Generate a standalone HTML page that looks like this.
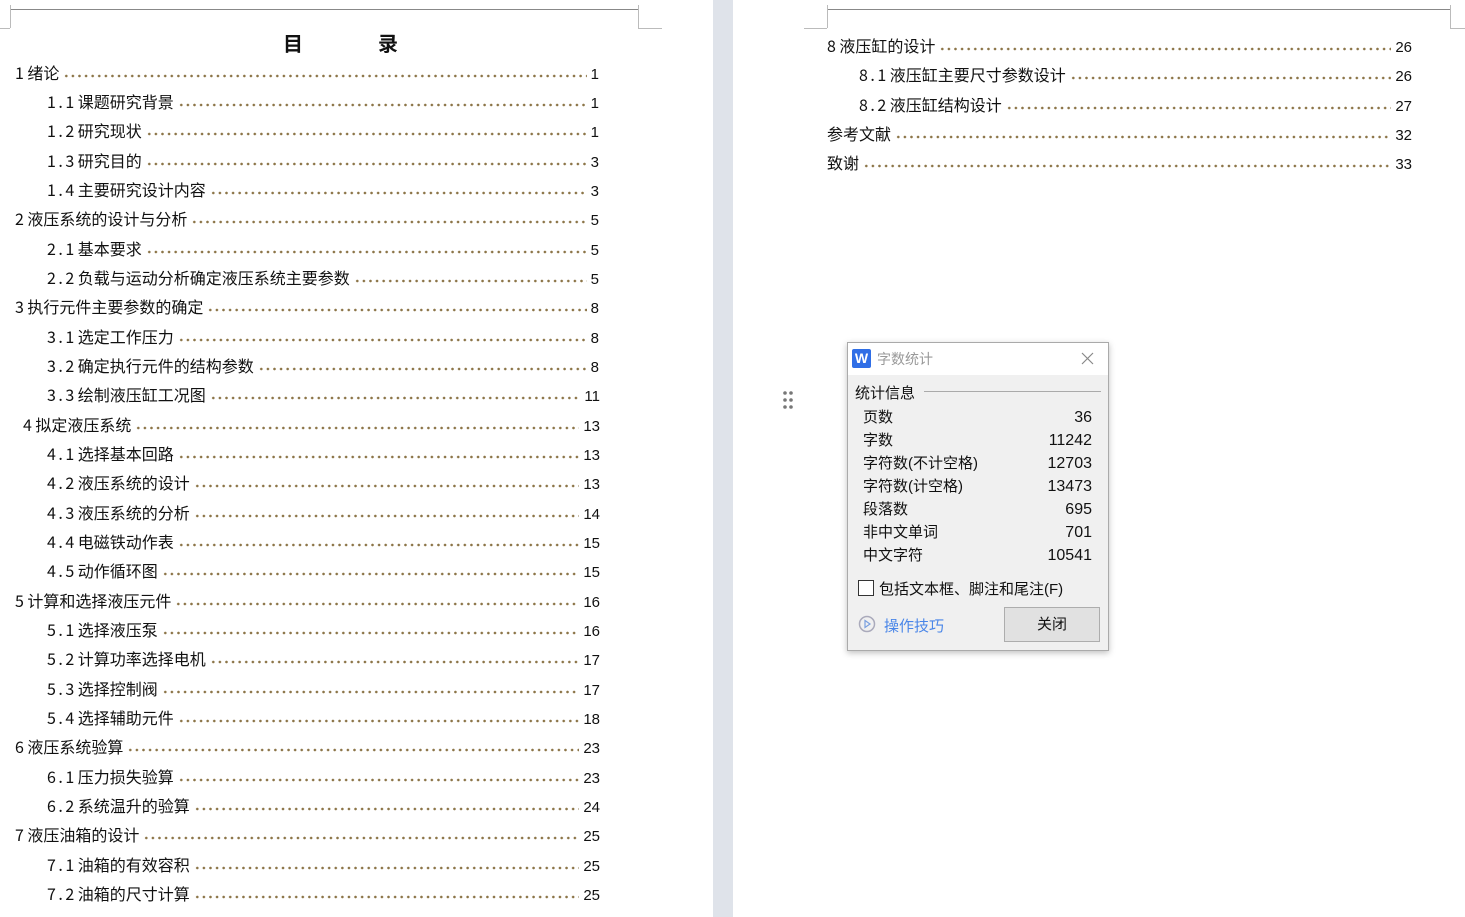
<!DOCTYPE html>
<html><head><meta charset="utf-8"><style>
body{margin:0;width:1465px;height:917px;overflow:hidden;background:#fff;position:relative;font-family:"Liberation Sans","Noto Sans CJK SC",sans-serif;color:#111}
.a{position:absolute}
.r{position:absolute;height:20px;line-height:20px;font-size:16px;display:flex;align-items:baseline;font-family:"Noto Sans CJK SC",sans-serif}
.r .num{letter-spacing:2.5px;margin-right:1px}
.r .f{flex:1;margin:0 4px;height:16px;align-self:flex-start;background-image:radial-gradient(circle at 50% 50%,#8c7548 1.1px,transparent 1.5px);background-size:6.6px 4px;background-repeat:repeat-x;background-position:0 100%}
.r .n{font-family:"Liberation Sans",sans-serif;font-size:15px}
.dlg{font-family:"Liberation Sans","Noto Sans CJK SC",sans-serif;font-size:15px}
</style></head><body>
<div class="a" style="left:713px;top:0;width:20px;height:917px;background:#dfe3ea"></div>
<div class="a" style="left:10px;top:9px;width:628px;height:1px;background:#888"></div>
<div class="a" style="left:10px;top:5px;width:1px;height:23px;background:#bbb"></div>
<div class="a" style="left:0;top:28px;width:10px;height:1px;background:#bbb"></div>
<div class="a" style="left:638px;top:5px;width:1px;height:23px;background:#bbb"></div>
<div class="a" style="left:638px;top:28px;width:24px;height:1px;background:#bbb"></div>
<div class="a" style="left:827px;top:9px;width:623px;height:1px;background:#888"></div>
<div class="a" style="left:827px;top:5px;width:1px;height:23px;background:#bbb"></div>
<div class="a" style="left:804px;top:28px;width:23px;height:1px;background:#bbb"></div>
<div class="a" style="left:1450px;top:5px;width:1px;height:23px;background:#bbb"></div>
<div class="a" style="left:1450px;top:28px;width:15px;height:1px;background:#bbb"></div>

<div class="a" style="left:283px;top:28px;font-size:20px;font-weight:bold;font-family:'Noto Sans CJK SC',sans-serif">目</div>
<div class="a" style="left:378px;top:28px;font-size:20px;font-weight:bold;font-family:'Noto Sans CJK SC',sans-serif">录</div>

<div class="r" style="left:15px;width:584px;top:62px"><span class="num">1 </span><span>绪论</span><span class="f"></span><span class="n">1</span></div>
<div class="r" style="left:47px;width:552px;top:91px"><span class="num">1.1 </span><span>课题研究背景</span><span class="f"></span><span class="n">1</span></div>
<div class="r" style="left:47px;width:552px;top:120px"><span class="num">1.2 </span><span>研究现状</span><span class="f"></span><span class="n">1</span></div>
<div class="r" style="left:47px;width:552px;top:150px"><span class="num">1.3 </span><span>研究目的</span><span class="f"></span><span class="n">3</span></div>
<div class="r" style="left:47px;width:552px;top:179px"><span class="num">1.4 </span><span>主要研究设计内容</span><span class="f"></span><span class="n">3</span></div>
<div class="r" style="left:15px;width:584px;top:208px"><span class="num">2 </span><span>液压系统的设计与分析</span><span class="f"></span><span class="n">5</span></div>
<div class="r" style="left:47px;width:552px;top:238px"><span class="num">2.1 </span><span>基本要求</span><span class="f"></span><span class="n">5</span></div>
<div class="r" style="left:47px;width:552px;top:267px"><span class="num">2.2 </span><span>负载与运动分析确定液压系统主要参数</span><span class="f"></span><span class="n">5</span></div>
<div class="r" style="left:15px;width:584px;top:296px"><span class="num">3 </span><span>执行元件主要参数的确定</span><span class="f"></span><span class="n">8</span></div>
<div class="r" style="left:47px;width:552px;top:326px"><span class="num">3.1 </span><span>选定工作压力</span><span class="f"></span><span class="n">8</span></div>
<div class="r" style="left:47px;width:552px;top:355px"><span class="num">3.2 </span><span>确定执行元件的结构参数</span><span class="f"></span><span class="n">8</span></div>
<div class="r" style="left:47px;width:553px;top:384px"><span class="num">3.3 </span><span>绘制液压缸工况图</span><span class="f"></span><span class="n">11</span></div>
<div class="r" style="left:23px;width:577px;top:414px"><span class="num">4 </span><span>拟定液压系统</span><span class="f"></span><span class="n">13</span></div>
<div class="r" style="left:47px;width:553px;top:443px"><span class="num">4.1 </span><span>选择基本回路</span><span class="f"></span><span class="n">13</span></div>
<div class="r" style="left:47px;width:553px;top:472px"><span class="num">4.2 </span><span>液压系统的设计</span><span class="f"></span><span class="n">13</span></div>
<div class="r" style="left:47px;width:553px;top:502px"><span class="num">4.3 </span><span>液压系统的分析</span><span class="f"></span><span class="n">14</span></div>
<div class="r" style="left:47px;width:553px;top:531px"><span class="num">4.4 </span><span>电磁铁动作表</span><span class="f"></span><span class="n">15</span></div>
<div class="r" style="left:47px;width:553px;top:560px"><span class="num">4.5 </span><span>动作循环图</span><span class="f"></span><span class="n">15</span></div>
<div class="r" style="left:15px;width:585px;top:590px"><span class="num">5 </span><span>计算和选择液压元件</span><span class="f"></span><span class="n">16</span></div>
<div class="r" style="left:47px;width:553px;top:619px"><span class="num">5.1 </span><span>选择液压泵</span><span class="f"></span><span class="n">16</span></div>
<div class="r" style="left:47px;width:553px;top:648px"><span class="num">5.2 </span><span>计算功率选择电机</span><span class="f"></span><span class="n">17</span></div>
<div class="r" style="left:47px;width:553px;top:678px"><span class="num">5.3 </span><span>选择控制阀</span><span class="f"></span><span class="n">17</span></div>
<div class="r" style="left:47px;width:553px;top:707px"><span class="num">5.4 </span><span>选择辅助元件</span><span class="f"></span><span class="n">18</span></div>
<div class="r" style="left:15px;width:585px;top:736px"><span class="num">6 </span><span>液压系统验算</span><span class="f"></span><span class="n">23</span></div>
<div class="r" style="left:47px;width:553px;top:766px"><span class="num">6.1 </span><span>压力损失验算</span><span class="f"></span><span class="n">23</span></div>
<div class="r" style="left:47px;width:553px;top:795px"><span class="num">6.2 </span><span>系统温升的验算</span><span class="f"></span><span class="n">24</span></div>
<div class="r" style="left:15px;width:585px;top:824px"><span class="num">7 </span><span>液压油箱的设计</span><span class="f"></span><span class="n">25</span></div>
<div class="r" style="left:47px;width:553px;top:854px"><span class="num">7.1 </span><span>油箱的有效容积</span><span class="f"></span><span class="n">25</span></div>
<div class="r" style="left:47px;width:553px;top:883px"><span class="num">7.2 </span><span>油箱的尺寸计算</span><span class="f"></span><span class="n">25</span></div>

<div class="r" style="left:827px;width:585px;top:35px"><span class="num">8 </span><span>液压缸的设计</span><span class="f"></span><span class="n">26</span></div>
<div class="r" style="left:859px;width:553px;top:64px"><span class="num">8.1 </span><span>液压缸主要尺寸参数设计</span><span class="f"></span><span class="n">26</span></div>
<div class="r" style="left:859px;width:553px;top:94px"><span class="num">8.2 </span><span>液压缸结构设计</span><span class="f"></span><span class="n">27</span></div>
<div class="r" style="left:827px;width:585px;top:123px"><span>参考文献</span><span class="f"></span><span class="n">32</span></div>
<div class="r" style="left:827px;width:585px;top:152px"><span>致谢</span><span class="f"></span><span class="n">33</span></div>

<svg class="a" style="left:782px;top:390px" width="12" height="20"><g fill="#777"><circle cx="3" cy="3" r="1.8"/><circle cx="9" cy="3" r="1.8"/><circle cx="3" cy="10" r="1.8"/><circle cx="9" cy="10" r="1.8"/><circle cx="3" cy="17" r="1.8"/><circle cx="9" cy="17" r="1.8"/></g></svg>

<div class="a dlg" style="left:847px;top:342px;width:260px;height:307px;background:#f0f0f0;border:1px solid #aaa;box-shadow:0 2px 6px rgba(0,0,0,.25)">
 <div class="a" style="left:0;top:0;width:260px;height:32px;background:#fff"></div>
 <div class="a" style="left:4px;top:6px;width:19px;height:19px;background:#2f6ee6;border-radius:2px;color:#fff;font-weight:bold;font-size:14px;line-height:19px;text-align:center">W</div>
 <div class="a" style="left:29px;top:6px;color:#999;font-size:14px">字数统计</div>
 <svg class="a" style="left:233px;top:9px" width="13" height="13"><path d="M1 1L12 12M12 1L1 12" stroke="#888" stroke-width="1.2"/></svg>
 <div class="a" style="left:7px;top:39px">统计信息</div>
 <div class="a" style="left:76px;top:48px;width:177px;height:1px;background:#aaa"></div>
 <div class="a" style="left:15px;top:63px;line-height:23px">页数<br>字数<br>字符数(不计空格)<br>字符数(计空格)<br>段落数<br>非中文单词<br>中文字符</div>
 <div class="a" style="left:170px;width:74px;text-align:right;top:63px;line-height:23px;font-size:16px">36<br>11242<br>12703<br>13473<br>695<br>701<br>10541</div>
 <div class="a" style="left:10px;top:237px;width:14px;height:14px;border:1px solid #333;background:#fff"></div>
 <div class="a" style="left:31px;top:235px">包括文本框、脚注和尾注(F)</div>
 <svg class="a" style="left:10px;top:272px" width="18" height="18"><circle cx="9" cy="9" r="7.5" fill="none" stroke="#aab" stroke-width="1.5"/><path d="M7 5.5L12 9L7 12.5Z" fill="none" stroke="#7aa0e0" stroke-width="1.2"/></svg>
 <div class="a" style="left:36px;top:272px;color:#4a86e8">操作技巧</div>
 <div class="a" style="left:156px;top:264px;width:94px;height:33px;border:1px solid #adadad;background:#e1e1e1;text-align:center;line-height:33px">关闭</div>
</div>
</body></html>
